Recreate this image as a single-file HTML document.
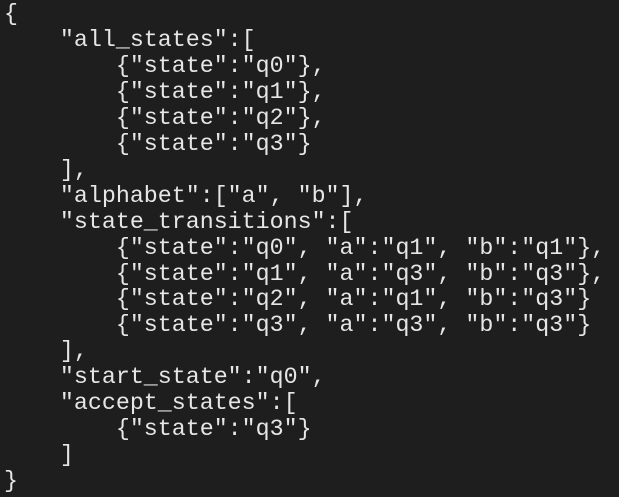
<!DOCTYPE html>
<html><head><style>
html,body{margin:0;padding:0;background:#1e1e1e;width:619px;height:497px;overflow:hidden}
pre{margin:0;padding:2px 0 0 4px;font-family:"Liberation Mono",monospace;font-size:23.3px;line-height:25.95px;color:#e6e6e6}
</style></head><body><pre>{
    "all_states":[
        {"state":"q0"},
        {"state":"q1"},
        {"state":"q2"},
        {"state":"q3"}
    ],
    "alphabet":["a", "b"],
    "state_transitions":[
        {"state":"q0", "a":"q1", "b":"q1"},
        {"state":"q1", "a":"q3", "b":"q3"},
        {"state":"q2", "a":"q1", "b":"q3"}
        {"state":"q3", "a":"q3", "b":"q3"}
    ],
    "start_state":"q0",
    "accept_states":[
        {"state":"q3"}
    ]
}</pre></body></html>
